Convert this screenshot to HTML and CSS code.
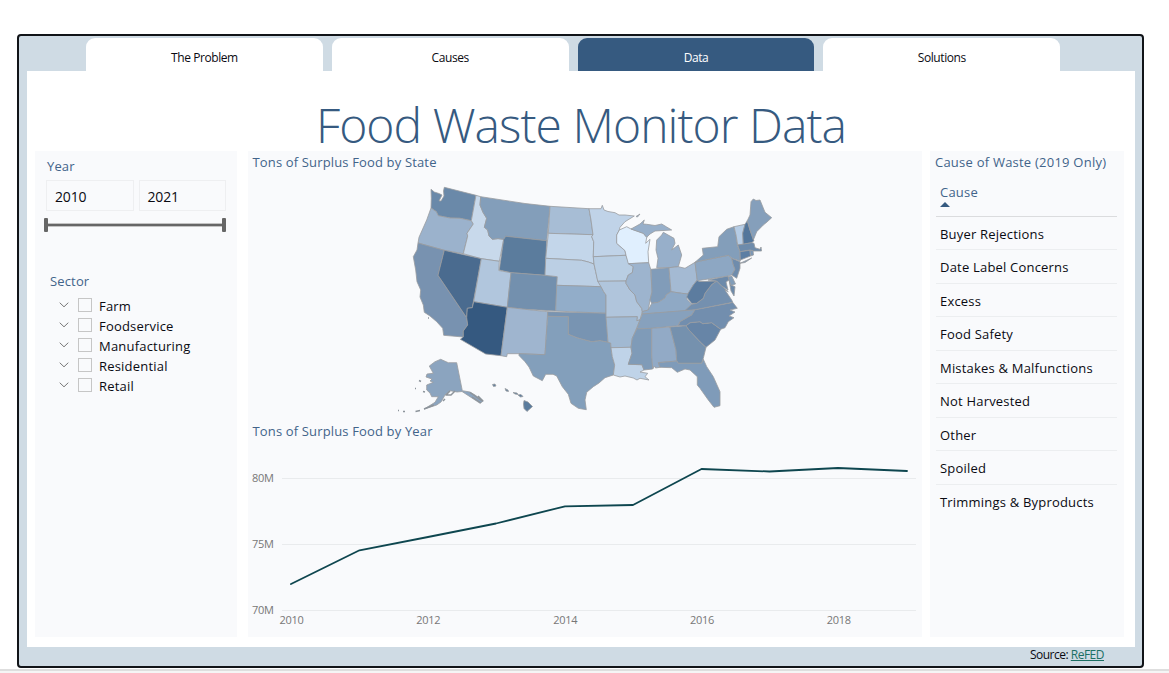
FILE: index.html
```
<!DOCTYPE html>
<html lang="en">
<head>
<meta charset="utf-8">
<title>Food Waste Monitor Data</title>
<link rel="stylesheet" href="styles.css">
</head>
<body>
<div class="frame">
  <nav class="tabs">
    <a class="tab">The Problem</a>
    <a class="tab">Causes</a>
    <a class="tab active">Data</a>
    <a class="tab">Solutions</a>
  </nav>
  <main class="page">
    <h1 class="title"><span>Food Waste Monitor Data</span></h1>
    <div class="columns">
      <section class="panel filters">
        <h2 class="label year-label">Year</h2>
        <div class="years"><div class="year">2010</div><div class="year">2021</div></div>
        <div class="slider"><i class="grip"></i><i class="track"></i><i class="grip"></i></div>
        <h2 class="label sector-label">Sector</h2>
        <ul class="sectors">
          <li><svg class="chev" viewBox="0 0 10 6"><path d="M.7.7 5 4.8 9.3.7"/></svg><i class="box"></i><span>Farm</span></li>
          <li><svg class="chev" viewBox="0 0 10 6"><path d="M.7.7 5 4.8 9.3.7"/></svg><i class="box"></i><span>Foodservice</span></li>
          <li><svg class="chev" viewBox="0 0 10 6"><path d="M.7.7 5 4.8 9.3.7"/></svg><i class="box"></i><span>Manufacturing</span></li>
          <li><svg class="chev" viewBox="0 0 10 6"><path d="M.7.7 5 4.8 9.3.7"/></svg><i class="box"></i><span>Residential</span></li>
          <li><svg class="chev" viewBox="0 0 10 6"><path d="M.7.7 5 4.8 9.3.7"/></svg><i class="box"></i><span>Retail</span></li>
        </ul>
      </section>
      <section class="panel charts">
        <h2 class="label">Tons of Surplus Food by State</h2>
        <svg class="map" viewBox="248 173 674 247">
          <path fill="#6a89a9" d="M431 189.300 434.300 192 439 193.500 442 195 439 201 441 201 444 196 443.500 191 444.300 187.300 476 195.300 471.300 220.700 460 218.300 450 218 438.300 215.700 436.300 211.700 431 208 431.300 198.300Z"/>
          <path fill="#9bb2cc" d="M431 208 436.300 211.700 438.300 215.700 450 218 460 218.300 471.300 220.700 473.300 224 467 233.300 467.700 236 463.300 253.700 444.300 250.300 418 243 419 237.300 426.700 220Z"/>
          <path fill="#c8d9eb" d="M476 195.300 480.700 196.700 480 205 483 212.300 486.700 218.300 484.300 227.300 487.700 230 489 236 492.300 239.300 498 238.600 503.700 239.300 499.300 261.300 481.300 258.700 463.300 253.700 467.700 236 467 233.300 473.300 224 471.300 220.700Z"/>
          <path fill="#839eba" d="M480.700 196.700 525 203.500 550 206.300 546.700 240.700 505.700 236.300 503.700 239.300 498 238.600 492.300 239.300 489 236 487.700 230 484.300 227.300 486.700 218.300 483 212.300 480 205Z"/>
          <path fill="#5b7c9d" d="M505.700 236.300 546.700 240.700 545 275.300 511 272.700 499.300 270 503.700 239.300Z"/>
          <path fill="#7892b0" d="M418 243 444.300 250.300 438 275.300 466.700 317.700 467.700 325 463.300 331 463.300 337 443.700 335.300 442.700 328.300 436.700 321.700 430 316 424.300 312.300 423.300 305 420 297 420.700 290 417 281.700 415.700 270 413.300 256.700 417 250Z"/>
          <path fill="#4a6b8f" d="M444.300 250.300 481.300 258.700 472.300 307.700 467.300 308.300 466.700 317.700 438 275.300Z"/>
          <path fill="#b1c6dd" d="M481.300 258.700 499.300 261.300 498.800 270.500 511 272.700 507.300 307.300 473.700 301.700Z"/>
          <path fill="#355980" d="M473.700 301.700 507.300 307.300 501 355.700 485.700 354 460.300 339.300 463.300 337 463.300 331 467.700 325 466.700 317.700 467.300 308.300 472.300 307.700Z"/>
          <path fill="#7390ae" d="M511 272.700 545 275.300 557.300 276.700 555.700 311 525 309.300 507.300 307.300Z"/>
          <path fill="#9fb5cf" d="M507.300 307.300 525 309.300 547.700 311.700 545 354.700 519 353.700 507.300 353.700 506.700 356.700 501 355.700Z"/>
          <path fill="#a7bdd5" d="M550 206.300 589 208.700 591 220 593 234.700 548.300 233.300Z"/>
          <path fill="#c3d6ea" d="M548.300 233.300 593 234.700 591.700 236.700 593.700 241.700 593.300 256.700 594 264 588.300 262 581.700 260.300 545.700 258.300Z"/>
          <path fill="#bbcfe4" d="M545.700 258.300 581.700 260.300 588.300 262 594 264 595.700 271.700 597.700 280 601 286.700 556.700 285.300 557.300 276.700 545 275.300Z"/>
          <path fill="#92adc9" d="M556.700 285.300 601 286.700 603.700 291.700 606 295 606 313.300 555.700 311Z"/>
          <path fill="#7894b2" d="M547.700 311.700 606 313.300 608 342.300 600 340.700 591.700 341.700 585 340 576.700 337.700 568.300 334.300 568.300 316.700 547.700 316.300Z"/>
          <path fill="#839fbb" d="M547.700 316.300 568.300 316.700 568.300 334.300 576.700 337.700 585 340 591.700 341.700 600 340.700 608 342.300 610.700 343 611 347.700 612.300 356.700 614.700 365 613.300 375 605 377.700 599 383 593.300 386.700 586.700 392.300 585 400 586.300 409.700 578.300 408.300 571 403.300 568.300 394.300 562.300 386.700 556.700 376 553 374.300 545.700 374.300 542.300 380.700 533.300 376 529 367 525 361.700 519 355.500 519 353.700 545 354.700Z"/>
          <path fill="#c0d3e8" d="M589 208.700 601 208.700 602.300 205.300 604 210 608 211.500 615 212.700 619 215 625 215 634.300 216 625 221.700 620 227.300 619.300 230 616.700 235 616.700 243.300 625 250.700 626 255.300 593.300 256.700 593.700 241.700 591.700 236.700 593 234.700 591 220Z"/>
          <path fill="#b9cee3" d="M593.300 256.700 626 255.300 628.300 261.700 633.300 266.700 632.300 272.700 628.300 275 626 281 597.700 281.300 595.700 271.700 594 264Z"/>
          <path fill="#b0c5dc" d="M597.700 281.300 626 281 626 283.300 630 290 635 295 636.700 301.700 641.700 308.300 642.300 311.700 640 320 636.700 320.700 637.300 316.700 606 317.300 606 295 603.700 291.700 601 286.700Z"/>
          <path fill="#a1b9d2" d="M606 317.300 637.300 316.700 636.700 320.700 640 320 636.700 328 632.300 338.300 631 347.300 611 347.700 610.700 343 608 342.300Z"/>
          <path fill="#bfd3e8" d="M611 347.700 631 347.300 632 353.300 628.300 364.300 642 364.700 644 370 640 372 647.700 373.300 645 376.700 649 380 640 378.300 637 380 633.300 378 625 376 620 377 613.300 375 614.700 365 612.300 356.700Z"/>
          <path fill="#e0effe" d="M619.300 230 626.700 226.700 631 229 643.300 233.300 646.700 237.300 645.700 243.300 650 239.300 648 251.700 648.700 262.700 628.300 263.700 626 255.300 625 250.700 616.700 243.300 616.700 235Z"/>
          <path fill="#97afca" d="M631 229 640 224 644.300 220 643 224 646.700 224.300 655 225.500 661.700 224 666.700 227 671.700 230 660 230.700 655 231 650 234 646.700 237.300 643.300 233.300ZM636 216.500 640 214 637.500 217ZM663.300 232.300 674 238.300 675 243.300 671.700 250 678.300 245 681.700 255 678.300 266.700 669 267.700 656.700 267.700 658 258.300 656 250 656.700 240 661.700 235Z"/>
          <path fill="#9db4ce" d="M628.300 263.700 648.700 262.700 650.700 269.300 652 292 650 300 648.300 310 642.300 311.700 641.700 308.300 636.700 301.700 635 295 630 290 626 283.300 626 281 628.300 275 632.300 272.700 633.300 266.700Z"/>
          <path fill="#819cb9" d="M651 269.300 669 267.700 671 291.700 666 295 665 298 658.300 302.300 651.700 303.300 650 300 652 292Z"/>
          <path fill="#a4bad3" d="M669 267.700 678.300 266.700 685 268.300 695 262.300 697.300 280 693.300 285 688.300 294 681.700 293.300 671 291.700Z"/>
          <path fill="#8fa9c5" d="M671 291.700 681.700 293.300 688.300 294 686.700 299 691.700 304.300 685 311 642.300 314 642.300 311.700 648.300 310 651.700 303.300 658.300 302.300 665 298 666 295Z"/>
          <path fill="#87a1bd" d="M642.300 314 685 310.500 695 309.700 691.700 315 680 321.700 678.300 325.700 650 328.500 636.700 329 640 320Z"/>
          <path fill="#7f9bb8" d="M636.700 329 651.700 328.300 651.700 355 652.700 369 644 370 642 364.700 628.300 364.300 632 353.300 631 347.300 632.300 338.300Z"/>
          <path fill="#92aac6" d="M651.700 328.300 670 327 676 350 676.700 361 658.300 362.700 660 367.300 655.500 368 654.500 366 652.700 369 651.700 355Z"/>
          <path fill="#7591ae" d="M670 327 686 325.700 689 330 700 341.700 706 347.300 703.300 358.300 701.700 363.300 678.300 363.300 676.700 361 676 350Z"/>
          <path fill="#7f9bb9" d="M658.300 362.700 676.700 361 678.300 363.300 701.700 363.300 703.300 359.300 706.700 366.700 713.300 376.700 720 391.700 720 405.700 714 407.300 708.300 400 700 388.300 697.300 385 697.300 376.700 690 370 685 369 677.300 372.300 671.700 367.700 660 367.300Z"/>
          <path fill="#6785a7" d="M686 325.700 690 322.700 700 321.700 702.700 323.700 711.700 322.700 720.700 329.300 715 340 706 347.300 700 341.700 689 330Z"/>
          <path fill="#728eae" d="M678.300 325.700 680 321.700 691.700 315 695 309.700 730 303 732.700 302.300 737.300 308.300 730 310 735 312 729 316 734 317.700 728.300 321.700 725 327.700 720.700 329.300 711.700 322.700 702.700 323.700 700 321.700 690 322.700 686 325.700Z"/>
          <path fill="#7490af" d="M685 310.500 691.700 304.300 696.700 303.300 703.300 298.300 705 293.300 711.700 284.500 716.700 281 721.700 286 728.300 291.700 725 290 729 296 731.700 300 732.700 302.300 695 309.700Z"/>
          <path fill="#5c7c9f" d="M697.300 280 699 281.500 716.700 281 711.700 284.500 705 293.300 703.300 298.300 696.700 303.300 691.700 303.500 686.700 297 688.300 293 693.300 285Z"/>
          <path fill="#6d8aaa" d="M708 280 728 276 731 285 735 286.700 734 296 731 291 729 280 726 282 728 290 721.700 286 716.700 281Z"/>
          <path fill="#829db9" d="M728 277 731.700 276 735.500 284 731 285.500Z"/>
          <path fill="#8da7c3" d="M695 262.300 700 261 728.300 255.300 731.700 258.300 733.300 265 735 269.300 731.700 275 728 276 697.300 280.700Z"/>
          <path fill="#6f8cac" d="M731.700 258.300 740 261.700 740 268.300 736.700 278.300 731.700 275 735 269.300 733.300 265Z"/>
          <path fill="#839eba" d="M695 262.300 703.300 255 702.300 248.300 717.700 246.700 719 236.700 726.700 229.300 734 226.700 736 235 737.300 245 740 251.700 740.300 261 732 258.300 728.300 255.300 700 261ZM740 263.300 751.700 258 745 262.500Z"/>
          <path fill="#b5cce5" d="M734 226.700 745 224.300 742.700 233.300 743.300 244.300 737.700 245 736 235Z"/>
          <path fill="#53769b" d="M745 224.300 747.300 220.700 750 230 754 240.700 751.700 242.700 743.300 244.300 742.700 233.300Z"/>
          <path fill="#859fbb" d="M747.300 220.700 750 215 751 201.700 753.300 199 756 200.500 760 200 765 212.300 771.700 217.700 767 222 763.300 225 756.700 231.700 753.300 240 750 230Z"/>
          <path fill="#6d8bab" d="M737.700 245 751.700 242.700 754 243.300 755 247.700 760 249.300 761 247 761.500 251 753.300 251 750 250 740 251.700Z"/>
          <path fill="#5c7ea3" d="M740 251.700 750 250.300 750.500 256 740.300 260Z"/>
          <path fill="#7b97b5" d="M750 250.300 753 250.500 753.500 255 750.500 256Z"/>
          <path fill="#8ba4bf" d="M440.700 359.300 448.300 362.700 456.700 362.700 462.300 390.700 470 392 475 395 483.300 401 480 403.300 470 396.700 462 391.500 457 392 450 390.700 445 395 441 402 436.700 405 424.300 409 435 402.300 438.300 396.700 431.700 396.700 430 393 426.700 390 426.700 385 433.300 382.300 430 381 432 379 426 377 427 374 433.300 373.300 429.300 366 435 361.700Z"/>
          <path class="isle" d="M470 392.500 482 401M472 397 481 403M478 396 483 401M450 391 446 395 451 395 455 391M443 401 445 399M419 380.500 421 381.500M415 388.500 416 388.500M423 391.500 425 392M424 409 434 405M415.500 411.500 420 410.500M403 411.500 405 411.500M398 410.500 399 410.500M428 318 429 318"/>
          <path fill="#5b7c9d" d="M492.500 384.500 495 384 496 386 493.500 386.500ZM505 388.500 508 390 508.500 391.500 506 391ZM513 392.500 517 393 518 394.500 515 394ZM518 395 521 394.500 523 396.500 520.500 397ZM524 400.500 528 402 532.500 406.500 527 411.500 524 408.500 523.500 404Z"/>
        </svg>
        <h2 class="label">Tons of Surplus Food by Year</h2>
        <svg class="line" viewBox="248 442 674 195">
          <path class="grid" d="M282 478.500H916M282 544.500H916M282 610.500H916"/>
          <g class="axis">
            <text x="252" y="482">80M</text><text x="252" y="548">75M</text><text x="252" y="614">70M</text>
            <text x="279.500" y="624">2010</text><text x="416.200" y="624">2012</text><text x="553.200" y="624">2014</text><text x="690" y="624">2016</text><text x="826.700" y="624">2018</text>
          </g>
          <path class="trend" d="M291 584 359.500 550.300 428 537 496 523.500 565 506.300 633 505 701.500 469 769.500 471.500 838 468 907 471"/>
        </svg>
      </section>
      <section class="panel causes">
        <h2 class="label">Cause of Waste (2019 Only)</h2>
        <div class="head"><span>Cause</span><i class="sort"></i></div>
        <ul class="rows">
          <li>Buyer Rejections</li><li>Date Label Concerns</li><li>Excess</li><li>Food Safety</li><li>Mistakes &amp; Malfunctions</li><li>Not Harvested</li><li>Other</li><li>Spoiled</li><li>Trimmings &amp; Byproducts</li>
        </ul>
      </section>
    </div>
  </main>
  <footer class="source">Source:&nbsp;<a>ReFED</a></footer>
</div>
<div class="status"></div>
</body>
</html>
```
FILE: styles.css
```
* { box-sizing: border-box; }
body {
  margin: 0;
  height: 673px;
  padding-top: 34px;
  overflow: hidden;
  background: #fff;
  font-family: "Open Sans", "Noto Sans", sans-serif;
  font-size: 13px;
  color: #0a0a12;
}
h1, h2, ul { margin: 0; padding: 0; font-weight: 400; list-style: none; }
.frame {
  width: 1127px;
  height: 634px;
  margin-left: 17px;
  padding: 2px 7px 0 8px;
  border: 2px solid #111418;
  border-radius: 4px;
  background: #cfdbe4;
}
.tabs { display: flex; gap: 9px; height: 32.500px; padding-left: 59px; }
.tab {
  width: 236.800px;
  border-radius: 9px 9px 0 0;
  background: #fff;
  text-align: center;
  font-size: 12px;
  line-height: 39px;
  letter-spacing: -0.420px;
}
.tab.active { background: #365a80; color: #fff; }
.page { height: 576.500px; padding: 0 11px 0 8px; background: #fff; }
.title {
  height: 80.500px;
  padding: 27px 0 0 3px;
  text-align: center;
  font-size: 48px;
  font-weight: 300;
  line-height: 54px;
  letter-spacing: -0.950px;
  color: #365a80;
  white-space: nowrap;
}
.columns { display: grid; grid-template-columns: 202px 674px 194px; column-gap: 11px; height: 486px; }
.causes { margin-left: -3px; }
.panel { width: 100%; background: #f9fafc; overflow: hidden; }
.label { font-size: 13px; line-height: 22px; height: 22px; letter-spacing: 0.150px; color: #42648a; white-space: nowrap; }
.filters { padding: 4px 0 0 12px; }
.years { display: flex; gap: 5px; margin: 3px 0 0 -1px; }
.year {
  width: 87.500px;
  height: 31px;
  padding-left: 8px;
  border: 1px solid #eeeff1;
  font-size: 14px;
  line-height: 31px;
  letter-spacing: -0.150px;
}
.slider { display: flex; align-items: center; width: 182px; height: 14px; margin: 7px 0 0 -3px; }
.grip { width: 4px; height: 14px; border-radius: 1px; background: #666; }
.track { flex: 1; height: 4px; background: #666; border: solid #c3c3c3; border-width: 1px 0; }
.sector-label { margin: 38px 0 3px 3px; }
.sectors li { display: flex; align-items: center; height: 20px; padding-left: 12px; font-size: 13px; line-height: 20px; letter-spacing: 0.200px; }
.chev { width: 10px; height: 6px; margin-top: -1px; fill: none; stroke: #777; stroke-width: 1; }
.box { width: 14px; height: 14px; margin: 0 7px 0 9px; border: 1px solid #c6c6c6; }
.sectors span { padding-top: 2px; }
.charts .label { padding-left: 4.500px; }
.map { display: block; width: 674px; height: 247px; }
.map path { stroke: #999c9f; stroke-width: .8; stroke-linejoin: round; }
.map .isle { fill: none; stroke: #8d949b; stroke-width: 1.5; }
.line { display: block; width: 674px; height: 195px; }
.grid { stroke: #e9ebed; fill: none; }
.axis { font-size: 11px; fill: #777; letter-spacing: -0.300px; }
.trend { fill: none; stroke: #0e464f; stroke-width: 1.8; stroke-linejoin: round; stroke-linecap: round; }
.causes .label { padding-left: 5px; letter-spacing: 0.230px; }
.head { width: 181px; height: 43.500px; margin-left: 6px; padding: 9px 0 0 4px; border-bottom: 1px solid #dbdcde; line-height: 20px; letter-spacing: 0.200px; color: #42648a; }
.sort { display: block; width: 0; border: solid transparent; border-width: 0 5px 5px; border-bottom-color: #365a80; }
.rows { width: 181px; margin-left: 6px; }
.rows li { height: 33.500px; padding-left: 4px; border-bottom: 1px solid #eceef0; line-height: 35px; letter-spacing: 0.200px; white-space: nowrap; }
.rows li:last-child { border: 0; }
.source { display: flex; justify-content: flex-end; padding-right: 31px; font-size: 12px; line-height: 16px; letter-spacing: -0.500px; }
.source a { color: #1c7064; text-decoration: underline; }
.status { height: 4px; margin-top: 1px; border-top: 2px solid #dedede; background: #f5f5f5; }
```
